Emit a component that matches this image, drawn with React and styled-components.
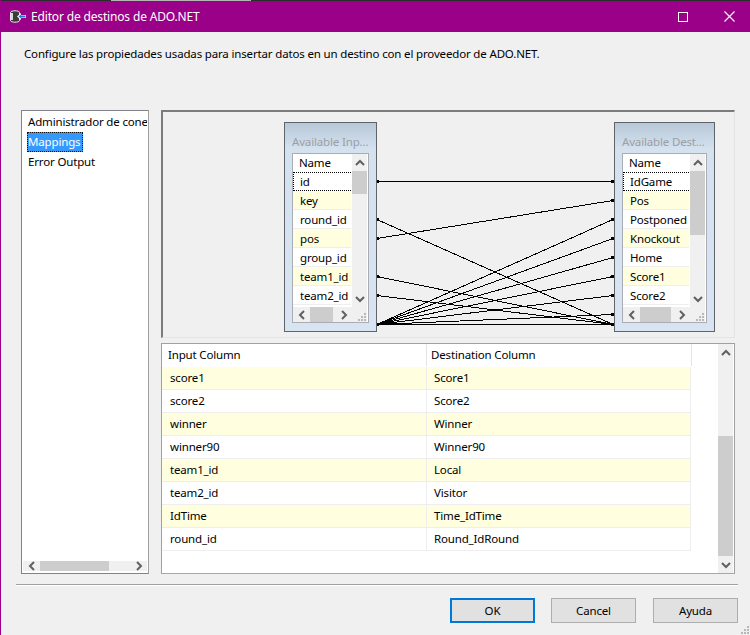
import React from "react";
import styled, { createGlobalStyle } from "styled-components";

const GlobalStyle = createGlobalStyle`
    html, body {
        margin: 0;
        padding: 0;
        background: #f0f0f0;
    }
    body {
        font-family: "Noto Sans", "Open Sans", sans-serif;
        font-size: 11.5px;
        letter-spacing: -0.16px;
        color: #000;
    }
`;

const Window = styled.div`
    width: 750px;
    height: 635px;
    box-sizing: border-box;
    border-left: 1px solid #9b0088;
    display: flex;
    flex-direction: column;
    overflow: hidden;
    position: relative;
`;

const TopEdge = styled.div`
    height: 1px;
    margin-left: -1px;
    background: linear-gradient(to right, #2b2b2b 111px, #b5b5b5 111px, #b5b5b5 251px, #2b2b2b 251px);
`;

const TitleBar = styled.div`
    height: 31px;
    flex: none;
    margin-right: -2px;
    background: #9b0088;
    color: #fff;
    display: flex;
    align-items: center;
    padding-left: 9px;
`;

const TitleText = styled.span`
    margin-left: 5px;
    flex: 1;
    font-size: 12px;
`;

const WindowButton = styled.div`
    width: 46px;
    height: 31px;
    display: flex;
    align-items: center;
    justify-content: center;
`;

const Intro = styled.div`
    height: 78px;
    flex: none;
    padding: 13px 0 0 23px;
    box-sizing: border-box;
    line-height: 17px;
`;

const Panels = styled.div`
    display: grid;
    grid-template-columns: 128px 574px;
    column-gap: 12px;
    padding-left: 20px;
    height: 464px;
    flex: none;
`;

const SideList = styled.div`
    box-sizing: border-box;
    background: #fff;
    border: 1px solid #82828c;
    border-right-color: #a0a0a0;
    display: flex;
    flex-direction: column;
    padding: 1px 1px 2px 1px;
    overflow: hidden;
`;

const SideItems = styled.div`
    flex: 1;
    padding: 0 0 0 4px;
    overflow: hidden;
`;

const SideItem = styled.div`
    height: 20px;
    line-height: 19px;
    white-space: nowrap;
    width: max-content;
    padding: 0 1px;
    box-sizing: border-box;
    ${(p) =>
        p.$selected &&
        `
        background: #3399ff;
        color: #fff;
        padding-right: 3px;
        outline: 1px dotted #111;
        outline-offset: -1px;
    `}
`;

const RightColumn = styled.div`
    display: flex;
    flex-direction: column;
    gap: 5px;
`;

const Canvas = styled.div`
    position: relative;
    height: 228px;
    box-sizing: border-box;
    border-top: 2px solid #7c7c7c;
    border-left: 2px solid #7c7c7c;
    border-right: 1px solid #e4e4e4;
    border-bottom: 1px solid #e4e4e4;
`;

const Wires = styled.svg`
    position: absolute;
    left: -163px;
    top: -112px;
    width: 750px;
    height: 635px;
    pointer-events: none;
`;

const TableNode = styled.div`
    position: absolute;
    left: ${(p) => p.$x}px;
    top: 10px;
    width: ${(p) => p.$w}px;
    height: 210px;
    box-sizing: border-box;
    border: 1px solid #5f6468;
    background: linear-gradient(to bottom, #b8c8d8, #d4e1ef 26px, #d8e4f1);
    padding: 10px 7px 8px 7px;
    display: flex;
    flex-direction: column;
`;

const NodeTitle = styled.div`
    height: 20px;
    line-height: 18px;
    color: #9a9fa5;
    white-space: nowrap;
`;

const NodeList = styled.div`
    flex: 1;
    background: #fff;
    border: 1px solid #a9adb2;
    display: grid;
    grid-template-columns: 1fr 15px;
    grid-template-rows: 1fr 15px;
    min-height: 0;
    padding-right: 1px;
`;

const NodeRows = styled.div`
    overflow: hidden;
`;

const NodeHead = styled.div`
    height: 18px;
    line-height: 18px;
    padding-left: 6px;
`;

const NodeRow = styled.div`
    height: 19px;
    line-height: 19px;
    box-sizing: border-box;
    padding-left: 7px;
    margin-right: 1px;
    border-bottom: 1px solid #eeeeee;
    background: ${(p) => (p.$alt ? "#ffffe0" : "#fff")};
    ${(p) =>
        p.$focus &&
        `
        border-top: 1px dotted #000;
        border-bottom: 1px dotted #000;
        border-left: 1px dotted #000;
        padding-left: 6px;
        line-height: 17px;
    `}
`;

const ScrollTrack = styled.div`
    background: #f0f0f0;
    display: flex;
    flex-direction: ${(p) => (p.$vertical ? "column" : "row")};
    align-items: stretch;
`;

const ScrollButton = styled.div`
    flex: none;
    ${(p) => (p.$vertical ? "height: 17px;" : "width: 17px;")}
    display: flex;
    align-items: center;
    justify-content: center;
`;

const ScrollSpace = styled.div`
    flex: 1;
    min-width: 0;
    min-height: 0;
`;

const ScrollThumb = styled.div`
    background: #cdcdcd;
    flex: none;
    ${(p) =>
        p.$vertical
            ? `height: ${p.$size}px; margin-top: ${p.$offset}px;`
            : `width: ${p.$size}px; margin-left: ${p.$offset}px;`}
`;

const Grip = styled.div`
    background: #f0f0f0;
    display: flex;
    align-items: flex-end;
    justify-content: flex-end;
`;

const GridPanel = styled.div`
    height: 231px;
    box-sizing: border-box;
    background: #fff;
    border: 1px solid #a0a0a0;
    border-bottom-color: #a8a8a8;
    display: grid;
    grid-template-columns: 1fr 15px;
    padding-right: 1px;
    overflow: hidden;
`;

const GridBody = styled.div`
    overflow: hidden;
`;

const GridRow = styled.div`
    display: grid;
    grid-template-columns: 265px ${(p) => (p.$head ? "265px" : "264px")};
    height: 23px;
    box-sizing: border-box;
    line-height: 22px;
`;

const GridHeadCell = styled.div`
    height: 22px;
    padding-left: ${(p) => (p.$second ? "4px" : "6px")};
    border-right: 1px solid #e4e4e4;
    background: #fff;
`;

const GridCell = styled.div`
    padding-left: ${(p) => (p.$second ? "7px" : "8px")};
    border-right: 1px solid #eeeeee;
    border-bottom: 1px solid #eeeeee;
    background: ${(p) => (p.$alt ? "#ffffe0" : "#fff")};
`;

const Separator = styled.div`
    height: 2px;
    flex: none;
    margin: 10px 12px 0 15px;
    background: linear-gradient(to bottom, #a0a0a0 1px, #fff 1px);
`;

const Actions = styled.div`
    display: flex;
    justify-content: flex-end;
    gap: 16px;
    padding: 12px 12px 0 0;
`;

const ActionButton = styled.button`
    width: 85px;
    height: 25px;
    box-sizing: border-box;
    padding: 0;
    font: inherit;
    letter-spacing: inherit;
    color: #000;
    background: #e1e1e1;
    margin-left: ${(p) => (p.$spaced ? "1px" : "0")};
    border: ${(p) => (p.$primary ? "2px solid #0078d7" : "1px solid #adadad")};
`;

const SizeGrip = styled.svg`
    position: absolute;
    right: 0;
    bottom: 0;
`;

const Chevron = ({ dir }) => {
    const points = {
        up: "1,6 5,2 9,6",
        down: "1,2 5,6 9,2",
        left: "6,1 2,5 6,9",
        right: "2,1 6,5 2,9",
    }[dir];
    const vertical = dir === "up" || dir === "down";
    return (
        <svg
            width={vertical ? 10 : 8}
            height={vertical ? 8 : 10}
            viewBox={vertical ? "0 0 10 8" : "0 0 8 10"}
        >
            <polyline points={points} fill="none" stroke="#606060" strokeWidth="2" />
        </svg>
    );
};

const gripCells = [
    [6, 0],
    [3, 3],
    [6, 3],
    [0, 6],
    [3, 6],
    [6, 6],
];

const GripDots = () => (
    <svg width="9" height="9" viewBox="0 0 9 9">
        {gripCells.map(([x, y]) => (
            <rect key={`${x}-${y}`} x={x} y={y} width="2" height="2" fill="#b8b8b8" />
        ))}
    </svg>
);

const VScroll = ({ size, offset }) => (
    <ScrollTrack $vertical>
        <ScrollButton $vertical>
            <Chevron dir="up" />
        </ScrollButton>
        <ScrollThumb $vertical $size={size} $offset={offset} />
        <ScrollSpace />
        <ScrollButton $vertical>
            <Chevron dir="down" />
        </ScrollButton>
    </ScrollTrack>
);

const HScroll = ({ size, offset }) => (
    <ScrollTrack>
        <ScrollButton>
            <Chevron dir="left" />
        </ScrollButton>
        <ScrollThumb $size={size} $offset={offset} />
        <ScrollSpace />
        <ScrollButton>
            <Chevron dir="right" />
        </ScrollButton>
    </ScrollTrack>
);

// database cylinder with the blue "into" arrow
const AppIcon = () => (
    <svg width="16" height="13" viewBox="0 0 16 13">
        <path d="M0.5 2.5C0.5 0.2 9.5 0.2 9.5 2.5V10.5C9.5 12.8 0.5 12.8 0.5 10.5Z" fill="#3c3c3c" stroke="#e6e6e6" />
        <rect x="1" y="3" width="2" height="7" fill="#d8d8d8" />
        <path d="M7 6.5 11 3V5H16V8H11V10Z" fill="#fff" />
        <path d="M8.5 6.5 11 4.5V5.5H15.5V7.5H11V8.5Z" fill="#1a78d8" />
    </svg>
);

const inputRows = ["id", "key", "round_id", "pos", "group_id", "team1_id", "team2_id"];
const destRows = ["IdGame", "Pos", "Postponed", "Knockout", "Home", "Score1", "Score2"];

const mappings = [
    ["score1", "Score1"],
    ["score2", "Score2"],
    ["winner", "Winner"],
    ["winner90", "Winner90"],
    ["team1_id", "Local"],
    ["team2_id", "Visitor"],
    ["IdTime", "Time_IdTime"],
    ["round_id", "Round_IdRound"],
];

const LEFT = 377;
const RIGHT = 613;
const wires = [
    [181.5, 181.5],
    [238.5, 200.5],
    [219.5, 324.5],
    [276.5, 324.5],
    [295.5, 324.5],
    [324.5, 219.5],
    [324.5, 238.5],
    [324.5, 257.5],
    [324.5, 276.5],
    [324.5, 295.5],
    [324.5, 314.5],
    [324.5, 324.5],
];

const Table = ({ x, w, title, rows, thumb, thumbH }) => (
    <TableNode $x={x} $w={w}>
        <NodeTitle>{title}</NodeTitle>
        <NodeList>
            <NodeRows>
                <NodeHead>Name</NodeHead>
                {rows.map((r, i) => (
                    <NodeRow key={r} $alt={i % 2 === 1} $focus={i === 0}>
                        {r}
                    </NodeRow>
                ))}
            </NodeRows>
            <VScroll size={thumb} offset={0} />
            <HScroll size={thumbH} offset={0} />
            <Grip>
                <GripDots />
            </Grip>
        </NodeList>
    </TableNode>
);

export default function App() {
    return (
        <Window>
            <GlobalStyle />
            <TopEdge />
            <TitleBar>
                <AppIcon />
                <TitleText>Editor de destinos de ADO.NET</TitleText>
                <WindowButton>
                    <svg width="10" height="10" viewBox="0 0 10 10">
                        <rect x="0.5" y="0.5" width="9" height="9" fill="none" stroke="#fff" />
                    </svg>
                </WindowButton>
                <WindowButton>
                    <svg width="11" height="11" viewBox="0 0 11 11">
                        <path d="M0.5 0.5 10.5 10.5M10.5 0.5 0.5 10.5" stroke="#fff" strokeWidth="1.1" />
                    </svg>
                </WindowButton>
            </TitleBar>
            <Intro>Configure las propiedades usadas para insertar datos en un destino con el proveedor de ADO.NET.</Intro>
            <Panels>
                <SideList>
                    <SideItems>
                        <SideItem>Administrador de conexiones</SideItem>
                        <SideItem $selected>Mappings</SideItem>
                        <SideItem>Error Output</SideItem>
                    </SideItems>
                    <HScroll size={69} offset={0} />
                </SideList>
                <RightColumn>
                    <Canvas>
                        <Wires viewBox="0 0 750 635">
                            {wires.map(([a, b]) => (
                                <g key={`${a}-${b}`}>
                                    <line x1={LEFT} y1={a} x2={RIGHT} y2={b} stroke="#000" strokeWidth="1" shapeRendering="crispEdges" />
                                    <rect x={LEFT} y={a - 1.5} width="2" height="3" fill="#000" />
                                    <rect x={RIGHT - 2} y={b - 1.5} width="3" height="3" fill="#000" />
                                </g>
                            ))}
                        </Wires>
                        <Table x={121} w={93} title="Available Inp..." rows={inputRows} thumb={23} thumbH={23} />
                        <Table x={451} w={101} title="Available Dest..." rows={destRows} thumb={64} thumbH={31} />
                    </Canvas>
                    <GridPanel>
                        <GridBody>
                            <GridRow $head>
                                <GridHeadCell>Input Column</GridHeadCell>
                                <GridHeadCell $second>Destination Column</GridHeadCell>
                            </GridRow>
                            {mappings.map(([a, b], i) => (
                                <GridRow key={a}>
                                    <GridCell $alt={i % 2 === 0}>{a}</GridCell>
                                    <GridCell $second $alt={i % 2 === 0}>{b}</GridCell>
                                </GridRow>
                            ))}
                        </GridBody>
                        <VScroll size={120} offset={75} />
                    </GridPanel>
                </RightColumn>
            </Panels>
            <Separator />
            <Actions>
                <ActionButton $primary>OK</ActionButton>
                <ActionButton>Cancel</ActionButton>
                <ActionButton $spaced>Ayuda</ActionButton>
            </Actions>
            <SizeGrip width="9" height="9" viewBox="0 0 9 9">
                {gripCells.map(([x, y]) => (
                    <rect key={`${x}-${y}`} x={x} y={y} width="2" height="2" fill="#b8b8b8" />
                ))}
            </SizeGrip>
        </Window>
    );
}
